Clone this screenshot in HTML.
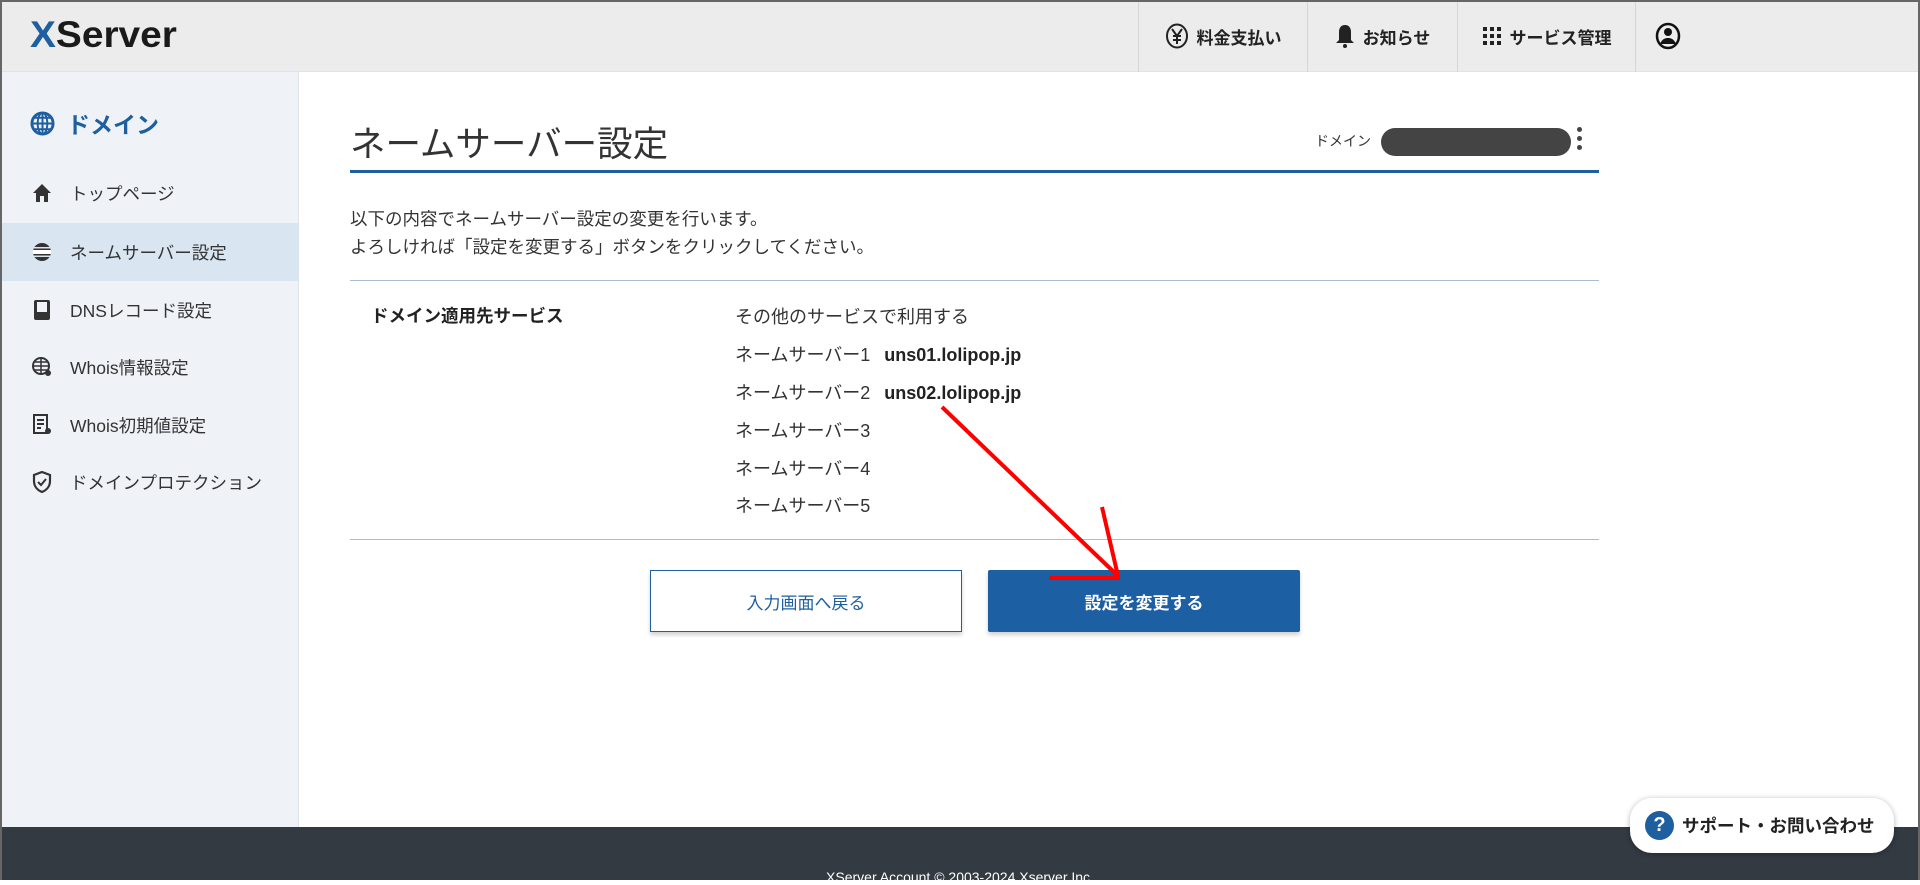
<!DOCTYPE html>
<html><head><meta charset="utf-8"><style>
*{box-sizing:border-box;margin:0;padding:0}
body{width:1920px;height:880px;overflow:hidden;position:relative;background:#fff;font-family:"Liberation Sans","Noto Sans CJK JP",sans-serif;color:#333}
.frame{position:absolute;inset:0;border:2px solid #666;border-bottom:none;pointer-events:none;z-index:20}
.hdr{position:absolute;left:0;top:0;width:1920px;height:72px;background:#ececec;border-bottom:1px solid #e2e2e2}
.logo{position:absolute;left:30px;top:14px;font-size:37px;font-weight:bold;letter-spacing:0px;color:#1a1a1a;transform:scaleX(1.05);transform-origin:left}
.logo span{color:#1e5fa0}
.nav{position:absolute;top:0;height:72px;display:flex;align-items:center;justify-content:center;gap:8px;font-size:17px;font-weight:bold;color:#222;border-left:1px solid #d6d6d6}
.side{position:absolute;left:0;top:72px;width:299px;height:755px;background:#eff3f7;border-right:1px solid #dde4ea}
.sh{position:absolute;left:30px;top:106px;display:flex;align-items:center;gap:12px;font-size:23px;font-weight:bold;color:#1e5fa0}
.si{position:absolute;left:0;width:299px;height:58px;display:flex;align-items:center;padding-left:32px;gap:18px;font-size:17.5px;color:#333}
.si.act{background:#d9e6f2}
.title{position:absolute;left:350px;top:116px;font-size:35.5px;color:#333}
.uline{position:absolute;left:350px;top:170px;width:1249px;height:3px;background:#1e5fa0}
.dl{position:absolute;left:1315px;top:131px;font-size:14px;color:#333}
.pill{position:absolute;left:1381px;top:128px;width:190px;height:28px;border-radius:14px;background:#444}
.dots{position:absolute;left:1577px;top:127px;width:5px}
.dots i{display:block;width:5px;height:5px;border-radius:50%;background:#444;margin-bottom:4px}
.p{position:absolute;left:350px;font-size:17.5px;color:#333}
.hr{position:absolute;left:350px;width:1249px;height:1px;background:#a9bdd0}
.lab{position:absolute;left:371px;top:303px;font-size:17.5px;font-weight:bold;color:#222}
.v{position:absolute;left:735px;font-size:18px;color:#333}
.v b{margin-left:14px;color:#222}
.btn{position:absolute;top:570px;height:62px;width:312px;display:flex;align-items:center;justify-content:center;font-size:17px;box-shadow:0 3px 4px rgba(0,0,0,.18)}
.b1{left:650px;border:1px solid #1e5fa0;color:#1e5fa0;background:#fff}
.b2{left:988px;background:#1c5fa3;color:#fff;font-weight:bold;border-radius:2px}
.foot{position:absolute;left:0;top:827px;width:1920px;height:53px;background:#343a42;color:#fff;font-size:14px;text-align:center;padding-top:42px}
.sup{position:absolute;left:1630px;top:798px;width:264px;height:55px;border-radius:22px;background:#fff;box-shadow:0 1px 6px rgba(0,0,0,.3);display:flex;align-items:center;padding-left:15px;gap:8px;font-size:17.5px;font-weight:bold;color:#222;z-index:5}
.q{width:29px;height:29px;border-radius:50%;background:#1e5fa0;color:#fff;font-size:20px;display:flex;align-items:center;justify-content:center}
</style></head><body>
<div class="frame"></div>
<div class="hdr">
 <div class="logo"><span>X</span>Server</div>
 <div class="nav" style="left:1138px;width:169px"><svg width="24" height="26" viewBox="0 0 24 26"><ellipse cx="12" cy="13" rx="10" ry="11.5" fill="none" stroke="#222" stroke-width="2"/><path d="M7 6l5 7 5-7M12 13v8M8 13h8M8 17h8" stroke="#222" stroke-width="2" fill="none"/></svg>料金支払い</div>
 <div class="nav" style="left:1307px;width:150px"><svg width="20" height="26" viewBox="0 0 20 26"><path d="M10 2c-4 0-6 3-6 7v8l-3 3h18l-3-3V9c0-4-2-7-6-7z" fill="#222"/><circle cx="10" cy="23" r="2" fill="#222"/></svg>お知らせ</div>
 <div class="nav" style="left:1457px;width:178px"><svg width="20" height="22" viewBox="0 0 20 22"><g fill="#222"><rect x="1" y="2" width="4" height="4"/><rect x="8" y="2" width="4" height="4"/><rect x="15" y="2" width="4" height="4"/><rect x="1" y="9" width="4" height="4"/><rect x="8" y="9" width="4" height="4"/><rect x="15" y="9" width="4" height="4"/><rect x="1" y="16" width="4" height="4"/><rect x="8" y="16" width="4" height="4"/><rect x="15" y="16" width="4" height="4"/></g></svg>サービス管理</div>
 <div class="nav" style="left:1635px;width:65px"><svg width="26" height="28" viewBox="0 0 26 28"><ellipse cx="13" cy="14" rx="11" ry="12" fill="none" stroke="#111" stroke-width="2.5"/><circle cx="13" cy="10" r="4" fill="#111"/><path d="M5 22c2-5 5-6 8-6s6 1 8 6" fill="#111"/></svg></div>
</div>
<div class="side">
 <div class="sh" style="top:34px"><svg width="25" height="25" viewBox="0 0 26 26"><circle cx="13" cy="13" r="11" fill="none" stroke="#1e5fa0" stroke-width="3"/><ellipse cx="13" cy="13" rx="5" ry="11" fill="none" stroke="#1e5fa0" stroke-width="2"/><path d="M2 13h22M4 7h18M4 19h18M13 2v22" stroke="#1e5fa0" stroke-width="2"/></svg>ドメイン</div>
 <div class="si" style="top:92px"><svg width="20" height="20" viewBox="0 0 20 20"><path d="M10 1L1 10h3v9h4v-6h4v6h4v-9h3z" fill="#333"/></svg>トップページ</div>
 <div class="si act" style="top:151px"><svg width="20" height="20" viewBox="0 0 20 20"><circle cx="10" cy="10" r="9" fill="#333"/><rect x="1" y="8" width="18" height="4" fill="#fff"/><rect x="1" y="5" width="18" height="1.5" fill="#d9e6f2"/><rect x="1" y="13.5" width="18" height="1.5" fill="#d9e6f2"/></svg>ネームサーバー設定</div>
 <div class="si" style="top:209px"><svg width="20" height="22" viewBox="0 0 20 22"><rect x="2" y="1" width="16" height="20" rx="2" fill="#333"/><rect x="5" y="3" width="10" height="10" fill="#eff3f7"/></svg>DNSレコード設定</div>
 <div class="si" style="top:266px"><svg width="20" height="22" viewBox="0 0 20 22"><circle cx="9" cy="10" r="8" fill="none" stroke="#333" stroke-width="2"/><path d="M1 10h16M9 2v16M3 6h12M3 14h12" stroke="#333" stroke-width="1.5"/><circle cx="16" cy="17" r="3" fill="#333"/></svg>Whois情報設定</div>
 <div class="si" style="top:324px"><svg width="20" height="22" viewBox="0 0 20 22"><rect x="2" y="1" width="13" height="18" fill="none" stroke="#333" stroke-width="2"/><path d="M5 6h7M5 10h7M5 14h4" stroke="#333" stroke-width="2"/><circle cx="16" cy="17" r="3" fill="#333"/></svg>Whois初期値設定</div>
 <div class="si" style="top:381px"><svg width="20" height="22" viewBox="0 0 20 22"><path d="M10 1L2 4v6c0 5 3 9 8 11 5-2 8-6 8-11V4z" fill="none" stroke="#333" stroke-width="2.2"/><path d="M6 11l3 3 5-6" stroke="#333" stroke-width="2" fill="none"/></svg>ドメインプロテクション</div>
</div>
<div class="title">ネームサーバー設定</div>
<div class="dl">ドメイン</div><div class="pill"></div>
<div class="dots"><i></i><i></i><i></i></div>
<div class="uline"></div>
<div class="p" style="top:206px">以下の内容でネームサーバー設定の変更を行います。</div>
<div class="p" style="top:234px">よろしければ「設定を変更する」ボタンをクリックしてください。</div>
<div class="hr" style="top:280px"></div>
<div class="lab">ドメイン適用先サービス</div>
<div class="v" style="top:303px">その他のサービスで利用する</div>
<div class="v" style="top:341px">ネームサーバー1<b>uns01.lolipop.jp</b></div>
<div class="v" style="top:379px">ネームサーバー2<b>uns02.lolipop.jp</b></div>
<div class="v" style="top:417px">ネームサーバー3</div>
<div class="v" style="top:455px">ネームサーバー4</div>
<div class="v" style="top:492px">ネームサーバー5</div>
<div class="hr" style="top:539px"></div>
<div class="btn b1">入力画面へ戻る</div>
<div class="btn b2">設定を変更する</div>
<svg style="position:absolute;left:0;top:0;z-index:6" width="1920" height="880"><g stroke="#f00" stroke-width="4" fill="none"><path d="M942 407L1118 576M1102 507L1118 576M1049 578H1120"/></g></svg>
<div class="foot">XServer Account © 2003-2024 Xserver Inc.</div>
<div class="sup"><div class="q">?</div>サポート・お問い合わせ</div>
</body></html>
